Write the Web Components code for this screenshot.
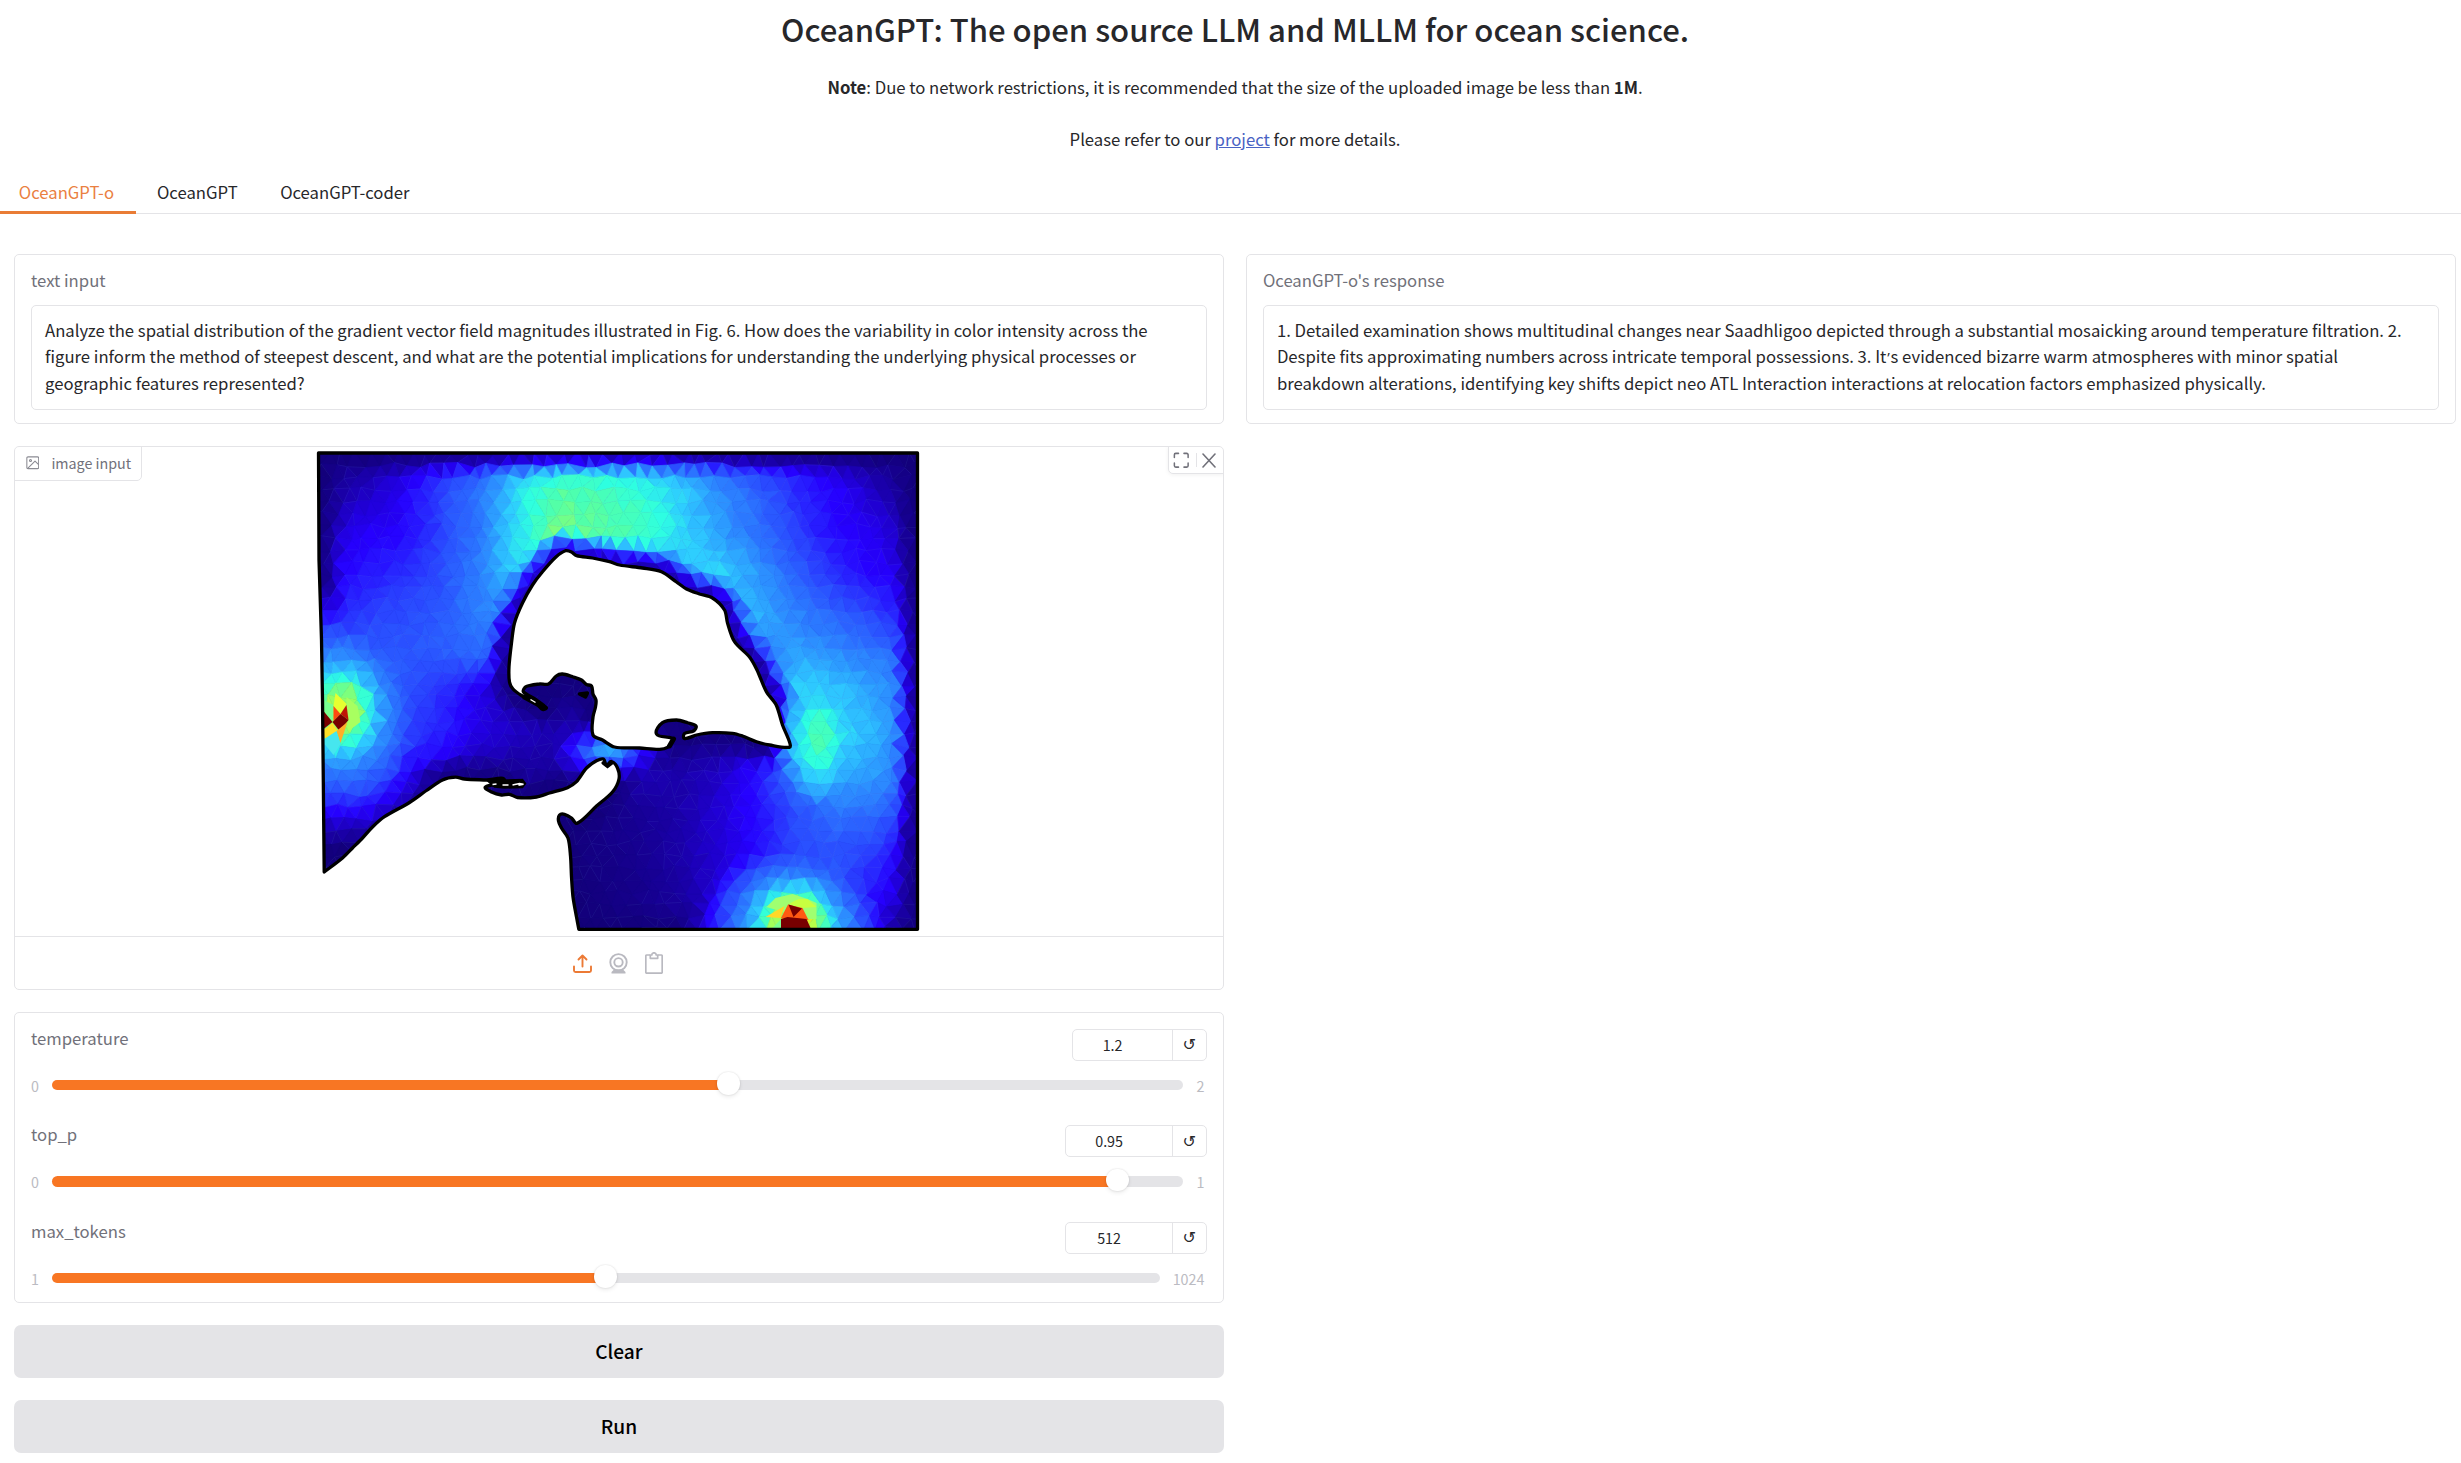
<!DOCTYPE html>
<html lang="en">
<head>
<meta charset="utf-8">
<title>OceanGPT</title>
<style>
body{margin:0;background:#fff;color:#27272a;font-family:"Noto Sans CJK SC","Open Sans",sans-serif;font-size:16.71px;line-height:26.4px}
</style>
</head>
<body>
<ocean-app></ocean-app>
<script>
const define = (name, html, setup) => {
  const tpl = document.createElement('template');
  tpl.innerHTML = html;
  customElements.define(name, class extends HTMLElement {
    connectedCallback() {
      if (this.shadowRoot) return;
      const root = this.attachShadow({ mode: 'open' });
      root.append(tpl.content.cloneNode(true));
      if (setup) setup(this, root);
    }
  });
};

/* ---------- heading ---------- */
define('page-intro', `
<style>
:host{display:flex;flex-direction:column;align-items:center;padding:6.5px 0 0 0;height:146px;width:2470px;color:#27272a}
h1{margin:0;font-size:31.07px;line-height:44px;font-weight:500}
p{margin:0;line-height:26.4px}
p.note{margin-top:23.5px;letter-spacing:-.012px}
p.more{margin-top:25.3px}
strong{font-weight:700}
a{color:#4a63c4;text-decoration:underline}
</style>
<h1>OceanGPT: The open source LLM and MLLM for ocean science.</h1>
<p class="note"><strong>Note</strong>: Due to network restrictions, it is recommended that the size of the uploaded image be less than <strong>1M</strong>.</p>
<p class="more">Please refer to our <a>project</a> for more details.</p>
`);

/* ---------- tabs ---------- */
define('tab-item', `
<style>
:host{display:block;box-sizing:border-box;height:39px;padding:0 21.3px 0 18.2px;border-bottom:3px solid transparent}
:host([selected]){color:#ea8041;border-bottom-color:#e97c35;padding-right:21.8px;padding-left:18.8px}
div{line-height:26.4px;padding-top:3.6px}
</style><div><slot></slot></div>`);
define('tab-bar', `
<style>
:host{display:flex;box-sizing:border-box;margin-top:22.5px;height:39px;gap:3px;box-shadow:inset 0 -1px #e4e4e7}
</style><slot></slot>`);

/* ---------- bordered card ---------- */
define('ui-card', `
<style>:host{display:block;box-sizing:border-box;border:1.3px solid #e4e4e7;border-radius:5px;background:#fff}</style><slot></slot>`);

define('text-box', `
<style>
:host{display:block}
ui-card{height:170px;padding:12.4px 15.8px}
.label{color:#71717a}
.area{box-sizing:border-box;border:1.3px solid #e4e4e7;border-radius:5px;height:104.6px;margin-top:11.4px;padding:10.6px 13px;white-space:pre}
</style>
<ui-card><div class="label"></div><div class="area"><slot></slot></div></ui-card>`,
(host, root) => { root.querySelector('.label').textContent = host.getAttribute('label'); });

/* ---------- mesh plot ---------- */
const SEA = [[324.7,872],[343,858],[353,848],[363,838],[373,827],[385,816.7],[410,802.5],[427,790.5],[443,780],[456,777.2],[465,779],[487,780],[505,780.8],[486,787],[492,792],[502,795],[510,794.3],[518,797.5],[537,797],[550,793],[568,787.7],[577,781.7],[587,768],[597,760.7],[604,759],[607,765],[612,761.5],[618,768],[619.5,779],[613,792],[597,806],[577.7,823.3],[572,818],[565,814.3],[560,815],[559,821],[562,828],[568.5,838],[571,856],[572,877],[573.5,897],[577,917],[579.3,929.3],[918,929.3],[918,453],[319,453],[319.5,560],[322,640],[323,700]];
const LAND = [[566,550.7],[556.7,556.7],[543,571.7],[533,585],[523,603],[515,623],[512,643],[509.5,667],[510,682],[513.5,689],[522,695.5],[535,702],[545,709],[537,700],[524,692],[525,688],[528,686],[540,684],[549,684],[556.7,676],[563,674],[573,676.7],[582,680],[587,684.5],[592,686],[593.5,694],[596.5,700],[596,707],[593.5,717],[593.5,735],[603,740],[615,747],[640,748],[660,749.3],[668,747.3],[673,741],[672,738],[657,734],[663,722.7],[677,720],[688,722.7],[696.5,726],[694,731],[685,733.5],[685,738.5],[697,735],[713,732.7],[733,733.3],[743,736],[757,741.7],[770,745],[790,747.3],[790,742],[783,725],[776.7,705],[767,692],[757.5,670],[750,657],[735,641.7],[728,623],[725,610],[713,598],[700,594],[687,589],[677,582],[662,571.7],[643,568],[620,565],[610,561.7],[593,558],[577,555.7],[572,552]];
const GRID = [
 [.03,.06,.13,.2,.27,.42,.5,.5,.48,.4,.32,.25,.2,.14,.06,.02],
 [.05,.12,.18,.28,.38,.55,.68,.66,.62,.53,.43,.34,.25,.2,.12,.04],
 [.12,.19,.2,.28,.38,.55,.74,.69,.65,.55,.45,.37,.28,.21,.18,.1],
 [.17,.22,.25,.3,.4,.55,.6,.5,.42,.5,.54,.44,.33,.25,.2,.15],
 [.2,.27,.3,.32,.4,.42,.3,.3,.3,.3,.46,.48,.4,.33,.27,.22],
 [.25,.34,.32,.33,.36,.24,.1,.1,.1,.1,.2,.4,.45,.42,.38,.3],
 [.36,.38,.33,.26,.18,.08,.03,.03,.03,.05,.1,.25,.55,.51,.45,.34],
 [.34,.36,.3,.25,.17,.13,.12,.15,.12,.06,.05,.1,.44,.56,.47,.36],
 [.2,.24,.21,.16,.1,.08,.08,.1,.13,.1,.13,.22,.4,.49,.44,.34],
 [.05,.1,.1,.08,.05,.05,.03,.03,.06,.1,.15,.22,.31,.38,.35,.24],
 [.03,.03,.03,.03,.03,.03,.03,.03,.05,.1,.15,.22,.29,.31,.27,.15],
 [.02,.02,.02,.02,.02,.02,.02,.02,.04,.08,.16,.22,.36,.33,.21,.12],
 [.02,.02,.02,.02,.02,.02,.02,.02,.04,.06,.13,.2,.35,.25,.15,.08]];
const JET = [[0,18,0,118],[.1,26,0,168],[.2,38,0,255],[.3,42,76,255],[.42,44,140,255],[.52,46,205,255],[.6,46,255,225],[.68,80,255,170],[.76,145,255,105],[.83,210,255,50],[.88,255,190,35],[.93,255,90,15],[.97,200,20,8],[1,118,0,0]];
/* sources: centre, x and y stretch of the distance, value by radius */
const SPOTS = [
 {x:341,y:712,sx:1,sy:.85,f:[[6,.78],[18,.74],[25,.64],[32,.56],[40,.47],[54,.38],[70,.3],[86,.2],[120,0]]},
 {x:795,y:927,sx:1,sy:1,f:[[12,.85],[24,.76],[30,.66],[40,.52],[52,.41],[66,.32],[80,.24],[100,.1],[120,0]]},
 {x:819,y:738,sx:1,sy:.55,f:[[6,.66],[12,.62],[18,.57],[26,.5],[34,.42],[50,0]]},
 {x:608,y:751,sx:.7,sy:1.3,f:[[7,.45],[13,.36],[20,.26],[30,.17],[50,0]]}];
function ramp(f, r){
  if (r <= f[0][0]) return f[0][1];
  for (let i=1;i<f.length;i++) if (r<=f[i][0]) { const a=f[i-1], b=f[i], t=(r-a[0])/(b[0]-a[0]); return a[1]+(b[1]-a[1])*t; }
  return 0;
}
function jet(v){
  v=Math.max(0,Math.min(1,v));
  for(let i=1;i<JET.length;i++) if(v<=JET[i][0]){const a=JET[i-1],b=JET[i],t=(v-a[0])/(b[0]-a[0]);
    return 'rgb('+[1,2,3].map(k=>Math.round(a[k]+(b[k]-a[k])*t)).join(',')+')';}
}
function wallDistance(x,y){
  let best=1e9;
  for(const P of [SEA,LAND]) for(let i=0;i<P.length;i++){
    const a=P[i], b=P[(i+1)%P.length], dx=b[0]-a[0], dy=b[1]-a[1];
    const t=Math.max(0,Math.min(1,((x-a[0])*dx+(y-a[1])*dy)/(dx*dx+dy*dy)));
    best=Math.min(best,Math.hypot(x-a[0]-t*dx,y-a[1]-t*dy));
  }
  return best;
}
function value(x,y){
  const u=Math.max(0,Math.min(14.999,(x-319)/40)), w=Math.max(0,Math.min(11.999,(y-453)/40));
  const i=u|0,j=w|0,s=u-i,t=w-j;
  let v=(GRID[j][i]*(1-s)+GRID[j][i+1]*s)*(1-t)+(GRID[j+1][i]*(1-s)+GRID[j+1][i+1]*s)*t;
  const d=wallDistance(x,y);
  v*=ramp([[3,.25],[8,.38],[15,.68],[23,1],[1e9,1]],d);
  for(const p of SPOTS) v=Math.max(v,ramp(p.f,Math.hypot((x-p.x)*p.sx,(y-p.y)*p.sy)));
  return v;
}
/* closed curve through the outline points, straight where segments are long */
function smooth(P){
  const n=P.length; let d='M'+P[0];
  for(let i=0;i<n;i++){
    const a=P[(i+n-1)%n],b=P[i],c=P[(i+1)%n],e=P[(i+2)%n];
    if(Math.hypot(c[0]-b[0],c[1]-b[1])>50){d+='L'+c;continue;}
    const L=Math.hypot(c[0]-b[0],c[1]-b[1]);
    const tan=(p,q)=>{const l=Math.hypot(q[0]-p[0],q[1]-p[1])||1;return [(q[0]-p[0])/l*L*.3,(q[1]-p[1])/l*L*.3];};
    const long=(p,q)=>Math.hypot(p[0]-q[0],p[1]-q[1])>50;
    const t1=long(a,b)?tan(b,c):tan(a,c), t2=long(c,e)?tan(b,c):tan(b,e);
    d+='C'+[b[0]+t1[0],b[1]+t1[1],c[0]-t2[0],c[1]-t2[1],c[0],c[1]].map(v=>v.toFixed(1)).join(' ');
  }
  return d+'Z';
}
define('mesh-plot', `
<style>:host{display:block;width:604px;height:482px}svg{display:block}</style>
<svg width="604" height="482" viewBox="316.5 450 604 482"></svg>`,
(host, root) => {
  let seed=7; const rnd=()=>((seed=(seed*16807)%2147483647)/2147483647)-.5;
  const S=13.8,H=12.2,rows=[];
  for(let j=-1;j<42;j++){const row=[];for(let i=-1;i<47;i++)row.push([316+i*S+(j&1?S/2:0)+rnd()*6.5,453+j*H+rnd()*5.5]);rows.push(row);}
  let out='';
  const tri=(a,b,c)=>{
    const x=(a[0]+b[0]+c[0])/3,y=(a[1]+b[1]+c[1])/3;
    let v=value(x,y); v+=rnd()*(.008+v*.05);
    const col=jet(v), d='M'+[a,b,c].map(p=>p[0].toFixed(1)+' '+p[1].toFixed(1)).join('L')+'Z';
    out+=`<path d="${d}" fill="${col}" stroke="${col}" stroke-width=".7"/>`;
    if(rnd()>.1) out+=`<path d="${d}" fill="none" stroke="#9ab4ff" stroke-opacity=".13" stroke-width=".6"/>`;
  };
  for(let j=0;j<rows.length-1;j++)for(let i=0;i<rows[0].length-1;i++){
    const a=rows[j][i],b=rows[j][i+1],c=rows[j+1][i],d=rows[j+1][i+1];
    /* row 0 of the array is j = -1, so even rows here are the shifted ones */
    if(j&1){tri(a,b,c);tri(b,d,c);}else{tri(a,b,d);tri(a,d,c);}
  }
  const hot=[
   ['#78ff90','324,700 334,705 333,722 324,712'],['#e6ff30','336,693 347,704 341,714 334,706'],['#a8ff60','347,697 358,706 361,722 349,731 347,720'],
   ['#780000','324,711 333,722 324,729'],['#ff4a10','334,706 341,714 334,721'],['#c01505','347,705 349,720 341,714'],
   ['#780000','341,714 349,720 340,731 333,722'],['#ffe028','324,730 333,723 338,731 325,739'],['#ffae28','337,731 348,722 341,743'],
   ['#46e6ee','325,739 337,731 341,744 334,755 325,744'],
   ['#a0ff70','767,907 776,898 793,894 808,899 817,903 817,919 808,919'],
   ['#ffd828','785,906 781,918 766,917'],['#c8ff40','789,904 799,899 808,899 817,907 803,908'],
   ['#ff5a12','788.5,904.5 803,908 809,920 781.5,918'],['#780000','789,904.5 802.5,908.5 794,917'],
   ['#780000','781.5,919 788,917 807,919 812,930 781.5,930'],
   ['#78ff90','781.5,919 781.5,929 772,929']];
  const svg=root.querySelector('svg');
  svg.innerHTML=`<clipPath id="w"><path clip-rule="evenodd" d="${smooth(SEA)}${smooth(LAND)}"/></clipPath>
  <g clip-path="url(#w)"><rect x="316" y="450" width="610" height="490" fill="#12007a"/>${out}${hot.map(h=>`<polygon fill="${h[0]}" points="${h[1]}"/>`).join('')}</g>
  <g fill="none" stroke="#000" stroke-width="3.3" stroke-linejoin="round"><path d="${smooth(LAND)}"/><path d="${smooth(SEA)}"/></g>
  <path d="M487 780h20l16-.5 3 4-3 4-18 .5-10-1z" fill="#000" stroke="#000" stroke-width="1.5"/>
  <path d="M493 784.500l4-.5M503 785h6M513 785l7-1.500 4 .8-5 1" stroke="#fff" stroke-width="1.400" fill="none"/>
  <path d="M580 694l8-1-2 4z" stroke="#000" stroke-width="3.500" stroke-linejoin="round"/>
  <path d="M525 697l11 6 10 5" stroke="#000" stroke-width="5" stroke-linecap="round"/>
  <path d="M531 699.500l5 3" stroke="#fff" stroke-width="1.400"/>
  <path d="M670 746l4-7" stroke="#000" stroke-width="5" stroke-linecap="round"/>
  <path d="M604 763l4 3 4-3" stroke="#000" stroke-width="4" fill="none" stroke-linecap="round"/>`;
});

/* ---------- image input ---------- */
define('image-input', `
<style>
:host{display:block;margin-top:22px}
ui-card{height:544px;position:relative;overflow:hidden}
.stage{height:489px;padding:3px 0 0 301px;box-sizing:border-box}
.tag{position:absolute;left:-1.3px;top:-1.3px;height:34.8px;width:128px;box-sizing:border-box;border:1.3px solid #e4e4e7;border-radius:5px 0 5px 0;display:flex;align-items:center;gap:12px;padding-left:11px;font-size:14.3px;color:#71717a;background:#fff}
.tag span{padding-top:.6px}
.tools{position:absolute;right:-1px;top:-1px;width:56px;height:28px;box-sizing:border-box;border:1.3px solid #e4e4e7;border-radius:0 5px 0 5px;background:#fff;display:flex;align-items:center;padding-left:4px;box-shadow:0 1px 4px rgba(0,0,0,.06)}
.tools i{width:1px;height:14px;background:#e4e4e7;margin:0 5.8px 0 6.500px}
.src{border-top:1.3px solid #e4e4e7;height:54px;display:flex;justify-content:center;align-items:center;gap:17px;padding:0 2px 1px 0;box-sizing:border-box}
svg{display:block;flex:none}
</style>
<ui-card>
 <div class="tag"><svg width="13.5" height="13.5" viewBox="0 0 24 24" fill="none" stroke="#8b8b93" stroke-width="1.9" stroke-linecap="round" stroke-linejoin="round"><rect x="1.500" y="1.500" width="21" height="21" rx="2"/><circle cx="8" cy="8" r="1.800"/><path d="M22 15l-6-6L3 22"/></svg><span>image input</span></div>
 <div class="stage"><mesh-plot></mesh-plot></div>
 <div class="tools">
  <svg width="16.500" height="16.500" viewBox="0 0 24 24" fill="none" stroke="#71717a" stroke-width="2.200" stroke-linecap="round" stroke-linejoin="round"><path d="M8 2H4a2 2 0 0 0-2 2v4M22 8V4a2 2 0 0 0-2-2h-4M2 16v4a2 2 0 0 0 2 2h4M16 22h4a2 2 0 0 0 2-2v-4"/></svg><i></i>
  <svg width="14" height="15" viewBox="0 0 14 15" fill="none" stroke="#71717a" stroke-width="1.600" stroke-linecap="round"><path d="M1 1l12 13M13 1L1 14"/></svg>
 </div>
 <div class="src">
  <svg width="19" height="19" viewBox="0 0 19 19" fill="none" stroke="#ec7a35" stroke-width="1.900" stroke-linecap="round" stroke-linejoin="round"><path d="M1 12.500v4a1.500 1.500 0 0 0 1.500 1.500h14a1.500 1.500 0 0 0 1.500-1.500v-4M9.500 12.500V1.500M5.500 5.500l4-4 4 4"/></svg>
  <svg width="19" height="21" viewBox="0 0 19 21" fill="none" stroke="#b9b9c0" stroke-width="1.900"><circle cx="9.500" cy="9.300" r="8.200"/><circle cx="9.500" cy="9.300" r="4.200"/><path d="M5 16.500h9l2.500 2.500v1.500H2.500V19z" fill="#b9b9c0" stroke="none"/></svg>
  <svg width="18" height="22" viewBox="0 0 18 22" fill="none" stroke="#b9b9c0" stroke-width="1.700" stroke-linejoin="round"><path d="M5 3H1.800a1 1 0 0 0-1 1v16.200a1 1 0 0 0 1 1h14.400a1 1 0 0 0 1-1V4a1 1 0 0 0-1-1H13"/><path d="M5.300 3v3.300h7.400V3h-1.500a2.200 2.200 0 0 0-4.400 0z"/></svg>
 </div>
</ui-card>`);

/* ---------- slider ---------- */
define('range-slider', `
<style>
:host{display:block;height:96.5px;box-sizing:border-box}
.head{display:flex;justify-content:space-between;height:44px}
.label{color:#71717a;margin-top:-4px}
.num{box-sizing:border-box;height:32px;border:1.3px solid #e4e4e7;border-radius:5px;display:flex;font-size:14.3px;line-height:29px}
.val{flex:1;text-align:center;padding-right:19.500px}
.reset{width:34px;border-left:1.3px solid #e4e4e7;text-align:center;font-family:"DejaVu Sans",sans-serif;font-size:16px;padding-top:.6px;box-sizing:border-box}
.row{display:flex;align-items:center;height:22px;color:#bbbbc2;font-size:14.3px;line-height:22px}
.min{width:20.900px}
.track{flex:1;height:10.500px;border-radius:6px;position:relative;margin-top:2.500px}
.thumb{position:absolute;width:22.500px;height:22.500px;border-radius:50%;background:#fff;top:-7.600px;box-shadow:0 0 2px rgba(0,0,0,.14),0 2px 4px rgba(0,0,0,.08)}
.max{padding-left:13px;text-align:right;padding-right:2.200px}
.min,.max{padding-top:3.600px}
</style>
<div class="head"><div class="label"></div><div class="num"><div class="val"></div><div class="reset">↺</div></div></div>
<div class="row"><span class="min"></span><div class="track"><div class="thumb"></div></div><span class="max"></span></div>`,
(host, root) => {
  const g=n=>host.getAttribute(n), q=s=>root.querySelector(s), at=parseFloat(g('at'));
  q('.label').textContent=g('label'); q('.val').textContent=g('value');
  q('.min').textContent=g('min'); q('.max').textContent=g('max');
  q('.num').style.width=g('box')+'px';
  q('.track').style.background=`linear-gradient(to right,#f87623 ${at}px,#e4e4e7 ${at}px)`;
  q('.thumb').style.left=(at-11.25)+'px';
});
define('slider-group', `
<style>:host{display:block;margin-top:22px}ui-card{height:291px;padding:15.900px 16px 0 15.800px}</style>
<ui-card>
<range-slider label="temperature" value="1.2" min="0" max="2" at="676.5" box="134.5"></range-slider>
<range-slider label="top_p" value="0.95" min="0" max="1" at="1065.500" box="141.5"></range-slider>
<range-slider label="max_tokens" value="512" min="1" max="1024" at="553.5" box="141.5"></range-slider>
</ui-card>`);

define('action-button', `
<style>:host{display:flex;align-items:center;justify-content:center;height:53px;margin-top:21.900px;border-radius:7px;background:#e4e4e7;color:#000;font-size:19.150px;font-weight:500}span{padding-bottom:1px}</style><span><slot></slot></span>`);

define('ocean-app', `
<style>
:host{display:block;width:2461px;height:1463px;overflow:hidden}
main{display:flex;gap:22.500px;padding:40px 5.500px 0 14.200px;align-items:flex-start}
.col{flex:1}
.apos{font-family:"Open Sans",sans-serif;font-size:15px;line-height:1;padding:0 .8px}
</style>
<page-intro></page-intro>
<tab-bar><tab-item selected>OceanGPT-o</tab-item><tab-item>OceanGPT</tab-item><tab-item>OceanGPT-coder</tab-item></tab-bar>
<main>
<div class="col">
<text-box label="text input">Analyze the spatial distribution of the gradient vector field magnitudes illustrated in Fig. 6. How does the variability in color intensity across the
figure inform the method of steepest descent, and what are the potential implications for understanding the underlying physical processes or
geographic features represented?</text-box>
<image-input></image-input>
<slider-group></slider-group>
<action-button>Clear</action-button>
<action-button>Run</action-button>
</div>
<div class="col">
<text-box label="OceanGPT-o's response">1. Detailed examination shows multitudinal changes near Saadhligoo depicted through a substantial mosaicking around temperature filtration. 2.
Despite fits approximating numbers across intricate temporal possessions. 3. It<span class="apos">’</span>s evidenced bizarre warm atmospheres with minor spatial
breakdown alterations, identifying key shifts depict neo ATL Interaction interactions at relocation factors emphasized physically.</text-box>
</div>
</main>`);
</script>
</body>
</html>
